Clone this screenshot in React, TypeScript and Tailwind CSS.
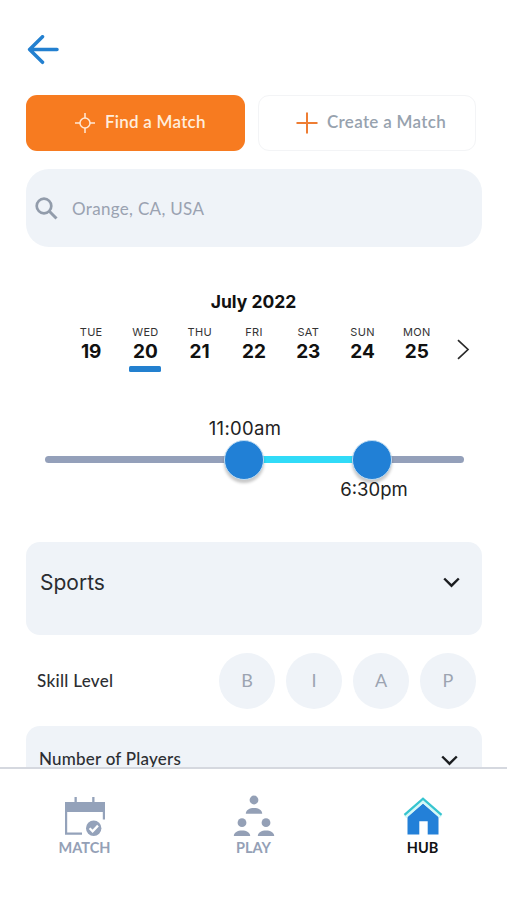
import type { ReactNode } from 'react'

type Day = { name: string; date: number }

const DAYS: Day[] = [
  { name: 'TUE', date: 19 },
  { name: 'WED', date: 20 },
  { name: 'THU', date: 21 },
  { name: 'FRI', date: 22 },
  { name: 'SAT', date: 23 },
  { name: 'SUN', date: 24 },
  { name: 'MON', date: 25 },
]

const SELECTED_DATE = 20
const SKILL_LEVELS = ['B', 'I', 'A', 'P']

// handle positions, in percent of the track
const RANGE = { from: 47.4, to: 78.1 }

function BackArrow() {
  return (
    <svg width="32" height="30" viewBox="0 0 32 30" fill="none" stroke="#2380d0" strokeWidth="3.5">
      <path d="M30 14.500H3M15.500 1.700 2.600 14.500l12.900 12.800" strokeLinejoin="round" strokeLinecap="round" />
    </svg>
  )
}

function TargetIcon() {
  return (
    <svg width="20" height="20" viewBox="0 0 20 20" fill="none" stroke="#ffe9d6" strokeWidth="1.5">
      <circle cx="10" cy="10" r="5" />
      <path d="M10 0v5M10 15v5M0 10h5M15 10h5" />
    </svg>
  )
}

function PlusIcon() {
  return (
    <svg width="22" height="22" viewBox="0 0 22 22" stroke="#ee7d33" strokeWidth="2">
      <path d="M11 .5v21M.5 11h21" />
    </svg>
  )
}

function SearchIcon() {
  return (
    <svg width="23" height="23" viewBox="0 0 23 23" fill="none" stroke="#929cab">
      <circle cx="9" cy="9" r="7.3" strokeWidth="2.7" />
      <path d="m14.3 14.3 7.2 7.2" strokeWidth="3" />
    </svg>
  )
}

function ChevronDown() {
  return (
    <svg width="17" height="11" viewBox="0 0 17 11" fill="none" stroke="#1b1d20" strokeWidth="2.4">
      <path d="m1.2 1.5 7.3 7.2 7.3-7.2" />
    </svg>
  )
}

function CalendarIcon() {
  return (
    <svg width="42" height="40" viewBox="0 0 42 40" fill="#94a2ba">
      <path d="M1 5h9.500V0h2.300v5h15.400V0h2.300v5H41v17.500h-2.200V15H3.200v20.500H18v2.200H1z" />
      <circle cx="29.700" cy="31.300" r="7.700" />
      <path d="m25.600 31.300 3 3 5.400-5.700" fill="none" stroke="#fff" strokeWidth="2.300" />
    </svg>
  )
}

function PlayersIcon() {
  return (
    <svg width="42" height="42" viewBox="0 0 42 42" fill="#94a0b6">
      <circle cx="21" cy="5" r="4.400" />
      <path d="M12.800 18.700c0-3.700 3.800-5.700 8.200-5.700s8.200 2 8.200 5.700z" />
      <circle cx="9" cy="27.700" r="4.400" />
      <path d="M.8 41c0-3.500 3.800-5.500 8.200-5.500s8.200 2 8.200 5.500z" />
      <circle cx="33" cy="27.700" r="4.400" />
      <path d="M24.800 41c0-3.500 3.800-5.500 8.200-5.500s8.200 2 8.200 5.500z" />
    </svg>
  )
}

function HubIcon() {
  return (
    <svg width="40" height="40" viewBox="0 0 40 40">
      <path d="M4.500 19.500 20 6.500l15.500 13v18H24.700V24.200h-8.400v13.300H4.500z" fill="#2380d8" />
      <path d="m2 19.800 18-16 18 16" fill="none" stroke="#d5f8f7" strokeWidth="4" />
      <path d="M1.500 17.800 20 1.700l18.500 16.100" fill="none" stroke="#36c5d0" strokeWidth="2.300" />
    </svg>
  )
}

function NavItem({ icon, label, active }: { icon: ReactNode; label: string; active?: boolean }) {
  return (
    <button className="flex flex-col items-center">
      <span className="flex h-[42px] items-end">{icon}</span>
      <span
        className={`mt-[2px] text-[14.500px] leading-[18px] font-bold ${active ? 'text-[#111214]' : 'text-[#94a0b6]'}`}
      >
        {label}
      </span>
    </button>
  )
}

function TimeSlider() {
  return (
    <section className="relative mt-[84px] ml-[45px] h-[7px] w-[419px] shrink-0 rounded-full bg-[#94a0ba]">
      <div
        className="absolute inset-y-0 bg-[#31dbf8]"
        style={{ left: `${RANGE.from}%`, right: `${100 - RANGE.to}%` }}
      />
      <div
        className="absolute top-1/2 mt-[0.500px] size-10 -translate-1/2 rounded-full border border-[#bfdcf2] bg-[#2180d6] shadow-[0_3px_3px_rgba(0,0,0,0.22)]"
        style={{ left: `${RANGE.from}%` }}
      />
      <div
        className="absolute top-1/2 mt-[0.500px] size-10 -translate-1/2 rounded-full border border-[#bfdcf2] bg-[#2180d6] shadow-[0_3px_3px_rgba(0,0,0,0.22)]"
        style={{ left: `${RANGE.to}%` }}
      />
      <span className="absolute -top-10 left-[200px] -translate-x-1/2 text-[18.500px] leading-6 tracking-[0.300px] text-[#222]">
        11:00am
      </span>
      <span className="absolute top-[21px] left-[329px] -translate-x-1/2 text-[18.500px] leading-6 text-[#222]">
        6:30pm
      </span>
    </section>
  )
}

export default function App() {
  return (
    <div className="flex h-[900px] w-[507px] flex-col overflow-hidden bg-white font-['Inter',sans-serif]">
      <main className="flex h-[767px] shrink-0 flex-col overflow-hidden">
        <button className="mt-[35px] ml-[27px] h-[30px] w-8 shrink-0" aria-label="Back">
          <BackArrow />
        </button>

        <div className="mt-[30px] ml-[26px] flex shrink-0 gap-[13px] font-['Lato',sans-serif] text-[17px] font-semibold">
          <button className="flex h-14 w-[219px] items-center rounded-[11px] bg-[#f77b20] pl-[49px] text-[#ffeddd]">
            <TargetIcon />
            <span className="-mt-0.5 ml-[10px] whitespace-nowrap tracking-[0.240px]">Find a Match</span>
          </button>
          <button className="flex h-14 w-[218px] items-center rounded-[11px] border border-[#f3f4f6] pl-[37px] text-[#97a2ae]">
            <PlusIcon />
            <span className="-mt-0.5 ml-[9px] whitespace-nowrap tracking-[0.300px]">Create a Match</span>
          </button>
        </div>

        <label className="mt-[18px] ml-[26px] flex h-[78px] w-[456px] shrink-0 items-center rounded-[23px] bg-[#eff3f8] pl-[9px]">
          <SearchIcon />
          <span className="mt-px ml-[14px] font-['Lato',sans-serif] text-[17px] tracking-[0.320px] text-[#9aa2b1]">
            Orange, CA, USA
          </span>
        </label>

        <section className="mt-[43px] shrink-0">
          <h2 className="text-center text-[17.500px] leading-6 font-bold text-[#111]">July 2022</h2>
          <div className="mt-[11px] ml-16 flex">
            <div className="grid w-[380px] grid-cols-7">
              {DAYS.map((day) => (
                <button key={day.date} className="flex flex-col items-center">
                  <span className="text-[11px] leading-[14px] tracking-[0.300px] text-[#333]">{day.name}</span>
                  <span className="mt-px text-[19px] leading-6 font-bold text-[#111]">{day.date}</span>
                  <span
                    className={`mt-[2px] h-[5.500px] w-8 rounded-[1.500px] ${day.date === SELECTED_DATE ? 'bg-[#2380cf]' : ''}`}
                  />
                </button>
              ))}
            </div>
            <button className="mt-[13.500px] ml-3 self-start" aria-label="Next week">
              <svg width="14" height="21" viewBox="0 0 14 21" fill="none" stroke="#2a2a2a" strokeWidth="1.700">
                <path d="m2 1.200 10 9.300-10 9.300" />
              </svg>
            </button>
          </div>
        </section>

        <TimeSlider />

        <section className="mt-[79.500px] ml-[26px] flex h-[93px] w-[456px] shrink-0 items-start justify-between rounded-[14px] bg-[#eff3f8] pt-[26.500px] pr-[22px] pl-[14px]">
          <span className="text-[21px] leading-7 text-[#2a2c30]">Sports</span>
          <span className="pt-[8px]">
            <ChevronDown />
          </span>
        </section>

        <section className="mt-[17.500px] ml-[37px] flex w-[439px] shrink-0 items-center justify-between font-['Lato',sans-serif]">
          <span className="text-[17px] font-medium tracking-[0.300px] text-[#2c2e32]">Skill Level</span>
          <div className="flex gap-[11px]">
            {SKILL_LEVELS.map((level) => (
              <button
                key={level}
                className="flex size-14 items-center justify-center rounded-full bg-[#eff3f8] text-[18px] text-[#9ca4b1]"
              >
                {level}
              </button>
            ))}
          </div>
        </section>

        <section className="mt-[17px] ml-[26px] flex h-[94px] w-[456px] shrink-0 items-start justify-between rounded-[14px] bg-[#eff3f8] pt-[21px] pr-[24px] pl-[13px]">
          <span className="font-['Lato',sans-serif] text-[17px] leading-6 font-medium tracking-[0.220px] text-[#2c2e32]">
            Number of Players
          </span>
          <span className="pt-[8px]">
            <ChevronDown />
          </span>
        </section>
      </main>

      <nav className="grid flex-1 grid-cols-3 items-start border-t-2 border-[#d5d8df] bg-white pt-[26px] font-['Lato',sans-serif]">
        <NavItem icon={<CalendarIcon />} label="MATCH" />
        <NavItem icon={<PlayersIcon />} label="PLAY" />
        <NavItem icon={<HubIcon />} label="HUB" active />
      </nav>
    </div>
  )
}
